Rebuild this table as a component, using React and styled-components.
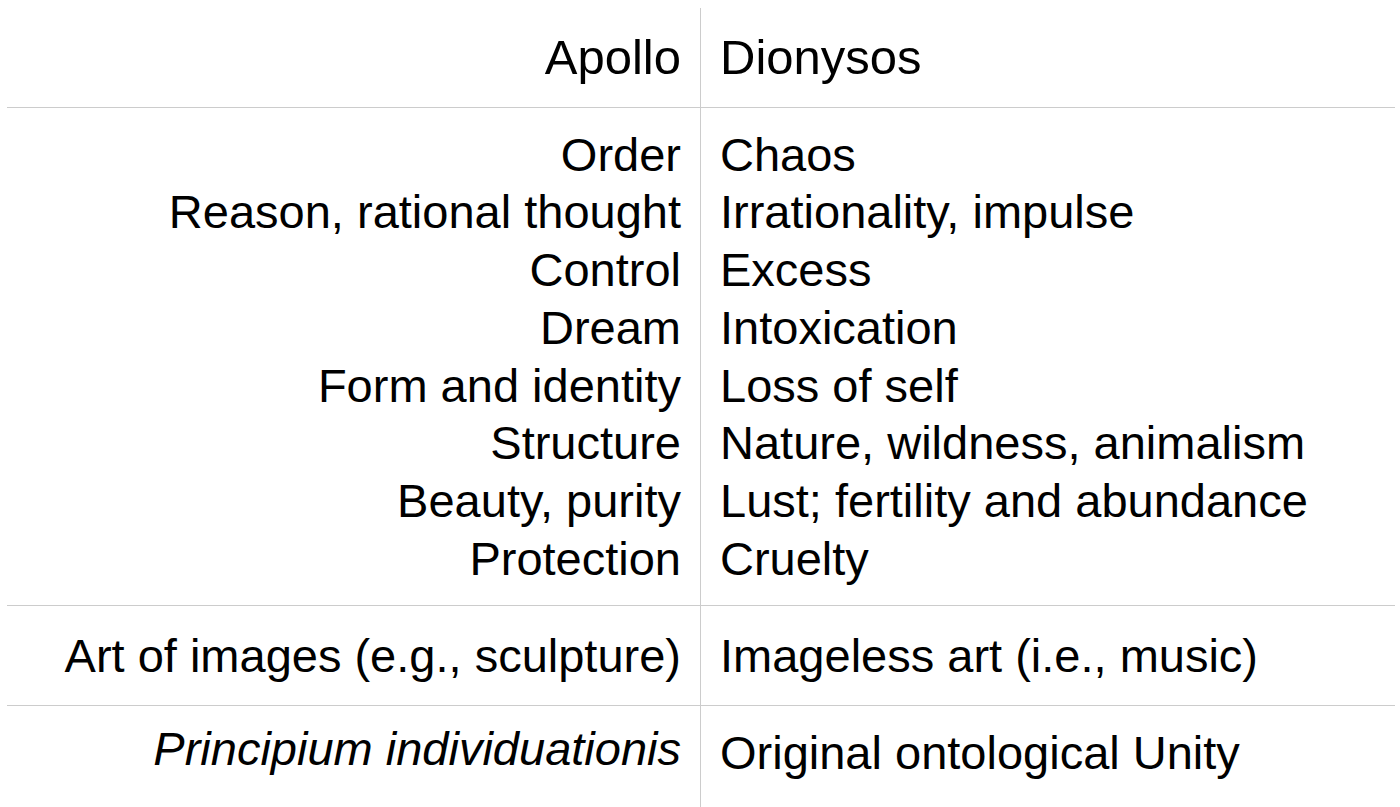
import React from "react";
import styled, { createGlobalStyle } from "styled-components";

const GlobalStyle = createGlobalStyle`
  html, body {
    margin: 0;
    padding: 0;
    background: #fff;
  }
  body {
    font-family: "Liberation Sans", Arial, Helvetica, sans-serif;
    color: #000;
    -webkit-font-smoothing: antialiased;
  }
`;

const Page = styled.div`
  padding: 8px 5px 0 7px;
  height: 807px;
  box-sizing: border-box;
  overflow: hidden;
`;

const Table = styled.div`
  display: flex;
  flex-direction: column;
  height: 100%;
`;

const Row = styled.div`
  display: grid;
  grid-template-columns: 1fr 1fr;
  border-bottom: ${(p) => (p.$last ? "none" : "1px solid #cccccc")};
  flex: ${(p) => (p.$last ? "1" : "none")};
`;

const Cell = styled.div`
  padding: ${(p) => p.$pad || "20px"} 19px;
  text-align: ${(p) => (p.$side === "left" ? "right" : "left")};
  border-right: ${(p) => (p.$side === "left" ? "1px solid #cccccc" : "none")};
  font-size: ${(p) => (p.$head ? "49px" : "47px")};
  line-height: 57.7px;
  font-style: ${(p) => (p.$italic ? "italic" : "normal")};
  white-space: nowrap;
`;

const Line = styled.div``;

const traits = [
  ["Order", "Chaos"],
  ["Reason, rational thought", "Irrationality, impulse"],
  ["Control", "Excess"],
  ["Dream", "Intoxication"],
  ["Form and identity", "Loss of self"],
  ["Structure", "Nature, wildness, animalism"],
  ["Beauty, purity", "Lust; fertility and abundance"],
  ["Protection", "Cruelty"],
];

export default function App() {
  return (
    <>
      <GlobalStyle />
      <Page>
        <Table>
          <Row>
            <Cell $side="left" $head $pad="20.5px">
              Apollo
            </Cell>
            <Cell $side="right" $head $pad="20.5px">
              Dionysos
            </Cell>
          </Row>
          <Row>
            <Cell $side="left" $pad="18px">
              {traits.map(([a]) => (
                <Line key={a}>{a}</Line>
              ))}
            </Cell>
            <Cell $side="right" $pad="18px">
              {traits.map(([, d]) => (
                <Line key={d}>{d}</Line>
              ))}
            </Cell>
          </Row>
          <Row>
            <Cell $side="left" $pad="20.5px">
              Art of images (e.g., sculpture)
            </Cell>
            <Cell $side="right" $pad="20.5px">
              Imageless art (i.e., music)
            </Cell>
          </Row>
          <Row $last>
            <Cell $side="left" $italic $pad="14px">
              Principium individuationis
            </Cell>
            <Cell $side="right" $pad="18px">
              Original ontological Unity
            </Cell>
          </Row>
        </Table>
      </Page>
    </>
  );
}
